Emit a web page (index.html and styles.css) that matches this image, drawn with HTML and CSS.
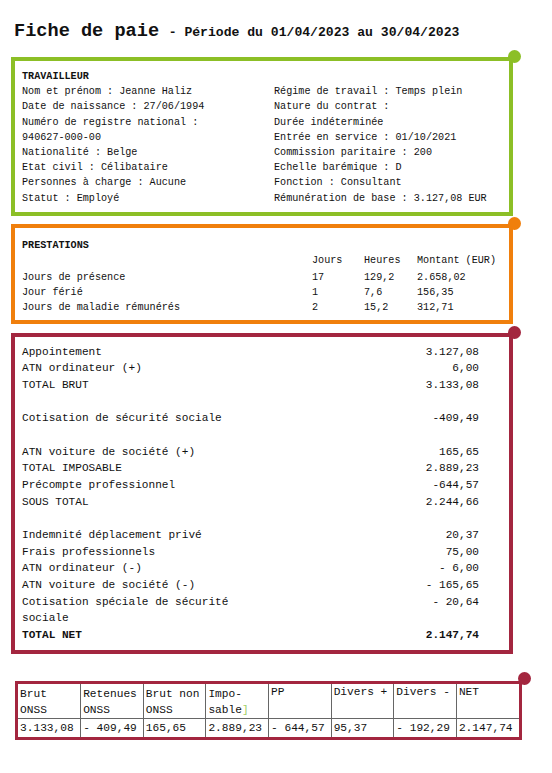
FILE: index.html
```html
<!DOCTYPE html>
<html lang="fr">
<head>
<meta charset="utf-8">
<title>Fiche de paie</title>
<link rel="stylesheet" href="styles.css">
</head>
<body>
<div class="page">
  <header class="title">
    <span class="t-main">Fiche de paie</span> <span class="t-sub">- Période du 01/04/2023 au 30/04/2023</span>
  </header>

  <section class="box green">
    <span class="dot"></span>
    <div class="heading">TRAVAILLEUR</div>
    <div class="cols">
      <div class="col">
        <div>Nom et prénom : Jeanne Haliz</div>
        <div>Date de naissance : 27/06/1994</div>
        <div>Numéro de registre national :</div>
        <div>940627-000-00</div>
        <div>Nationalité : Belge</div>
        <div>Etat civil : Célibataire</div>
        <div>Personnes à charge : Aucune</div>
        <div>Statut : Employé</div>
      </div>
      <div class="col">
        <div>Régime de travail : Temps plein</div>
        <div>Nature du contrat :</div>
        <div>Durée indéterminée</div>
        <div>Entrée en service : 01/10/2021</div>
        <div>Commission paritaire : 200</div>
        <div>Echelle barémique : D</div>
        <div>Fonction : Consultant</div>
        <div>Rémunération de base : 3.127,08 EUR</div>
      </div>
    </div>
  </section>

  <section class="box orange">
    <span class="dot"></span>
    <div class="heading">PRESTATIONS</div>
    <div class="prest">
      <div class="ph"></div><div class="ph">Jours</div><div class="ph">Heures</div><div class="ph">Montant (EUR)</div>
      <div>Jours de présence</div><div>17</div><div>129,2</div><div>2.658,02</div>
      <div>Jour férié</div><div>1</div><div>7,6</div><div>156,35</div>
      <div>Jours de maladie rémunérés</div><div>2</div><div>15,2</div><div>312,71</div>
    </div>
  </section>

  <section class="box crimson">
    <span class="dot"></span>
    <div class="calc">
      <div class="row"><span class="lbl">Appointement</span><span class="val">3.127,08</span></div>
      <div class="row"><span class="lbl">ATN ordinateur (+)</span><span class="val">6,00</span></div>
      <div class="row"><span class="lbl">TOTAL BRUT</span><span class="val">3.133,08</span></div>
      <div class="row gap"></div>
      <div class="row"><span class="lbl">Cotisation de sécurité sociale</span><span class="val">-409,49</span></div>
      <div class="row gap"></div>
      <div class="row"><span class="lbl">ATN voiture de société (+)</span><span class="val">165,65</span></div>
      <div class="row"><span class="lbl">TOTAL IMPOSABLE</span><span class="val">2.889,23</span></div>
      <div class="row"><span class="lbl">Précompte professionnel</span><span class="val">-644,57</span></div>
      <div class="row"><span class="lbl">SOUS TOTAL</span><span class="val">2.244,66</span></div>
      <div class="row gap"></div>
      <div class="row"><span class="lbl">Indemnité déplacement privé</span><span class="val">20,37</span></div>
      <div class="row"><span class="lbl">Frais professionnels</span><span class="val">75,00</span></div>
      <div class="row"><span class="lbl">ATN ordinateur (-)</span><span class="val">- 6,00</span></div>
      <div class="row"><span class="lbl">ATN voiture de société (-)</span><span class="val">- 165,65</span></div>
      <div class="row"><span class="lbl">Cotisation spéciale de sécurité sociale</span><span class="val">- 20,64</span></div>
      <div class="row total"><span class="lbl">TOTAL NET</span><span class="val">2.147,74</span></div>
    </div>
  </section>

  <section class="tbox">
    <span class="dot"></span>
    <table class="recap">
      <tr class="hd">
        <td>Brut<br>ONSS</td>
        <td>Retenues<br>ONSS</td>
        <td>Brut non<br>ONSS</td>
        <td>Impo-<br>sable<span class="caret">]</span></td>
        <td class="up">PP</td>
        <td class="up">Divers +</td>
        <td class="up">Divers -</td>
        <td class="up">NET</td>
      </tr>
      <tr class="dt">
        <td>3.133,08</td>
        <td>- 409,49</td>
        <td>165,65</td>
        <td>2.889,23</td>
        <td>- 644,57</td>
        <td>95,37</td>
        <td>- 192,29</td>
        <td>2.147,74</td>
      </tr>
    </table>
  </section>
</div>
</body>
</html>
```

FILE: styles.css
```css
* { box-sizing: border-box; }
html, body { margin: 0; padding: 0; background: #fff; }
body {
  font-family: "Liberation Mono", "Courier New", monospace;
  color: #111;
  width: 552px;
  height: 773px;
  overflow: hidden;
}
.page { padding: 0 0 0 11px; }

.title {
  padding: 21px 0 0 3px;
  line-height: 22px;
  height: 42px;
  white-space: nowrap;
}
.t-main { font-size: 18.6px; font-weight: bold; }
.t-sub { font-size: 13.1px; font-weight: bold; }

.box {
  position: relative;
  width: 502px;
  border: 4px solid;
}
.dot {
  position: absolute;
  width: 13px;
  height: 13px;
  border-radius: 50%;
  top: -11px;
  right: -12px;
}

.green {
  margin-top: 15px;
  border-color: #8cbf26;
  padding: 8px 7px 6px 7px;
  font-size: 10.15px;
  line-height: 15.2px;
}
.green .dot { background: #8cbf26; }
.heading { font-weight: bold; }
.cols { display: grid; grid-template-columns: 252px 1fr; }

.orange {
  margin-top: 8px;
  border-color: #f07f0c;
  padding: 10px 7px 5px 7px;
  font-size: 10.15px;
  line-height: 15px;
}
.orange .dot { background: #f07f0c; }
.prest {
  display: grid;
  grid-template-columns: 290px 52px 53px 1fr;
}
.prest .ph { padding-bottom: 2px; }

.crimson {
  margin-top: 9px;
  border-color: #a3263f;
  padding: 7px 30px 6px 7px;
  font-size: 11.1px;
  line-height: 16.65px;
}
.crimson .dot { background: #a3263f; }
.row { display: flex; justify-content: space-between; align-items: flex-start; }
.row.gap { height: 16.65px; }
.lbl { width: 240px; }
.val { white-space: pre; text-align: right; }
.total { font-weight: bold; }

.tbox {
  position: relative;
  margin: 27px 0 0 4px;
  width: 507px;
  border: 3px solid #a3263f;
}
.tbox .dot {
  background: #a3263f;
  top: -12px;
  right: -12px;
}
.recap {
  width: 100%;
  border-collapse: collapse;
  table-layout: fixed;
  font-size: 11.2px;
  line-height: 16px;
}
.recap td {
  border: 1px solid #666;
  padding: 0 1px 0 2px;
  vertical-align: top;
  white-space: nowrap;
  overflow: hidden;
}
.recap tr:first-child td { border-top: 0; }
.recap tr:last-child td { border-bottom: 0; }
.recap td:first-child { border-left: 0; }
.recap td:last-child { border-right: 0; }
.recap .hd td { padding-top: 2px; height: 34px; }
.recap .hd td.up { padding-top: 0; }
.recap .dt td { height: 18px; line-height: 17px; padding-top: 1px; }
.caret { color: #9fcf6a; font-weight: normal; }
```
